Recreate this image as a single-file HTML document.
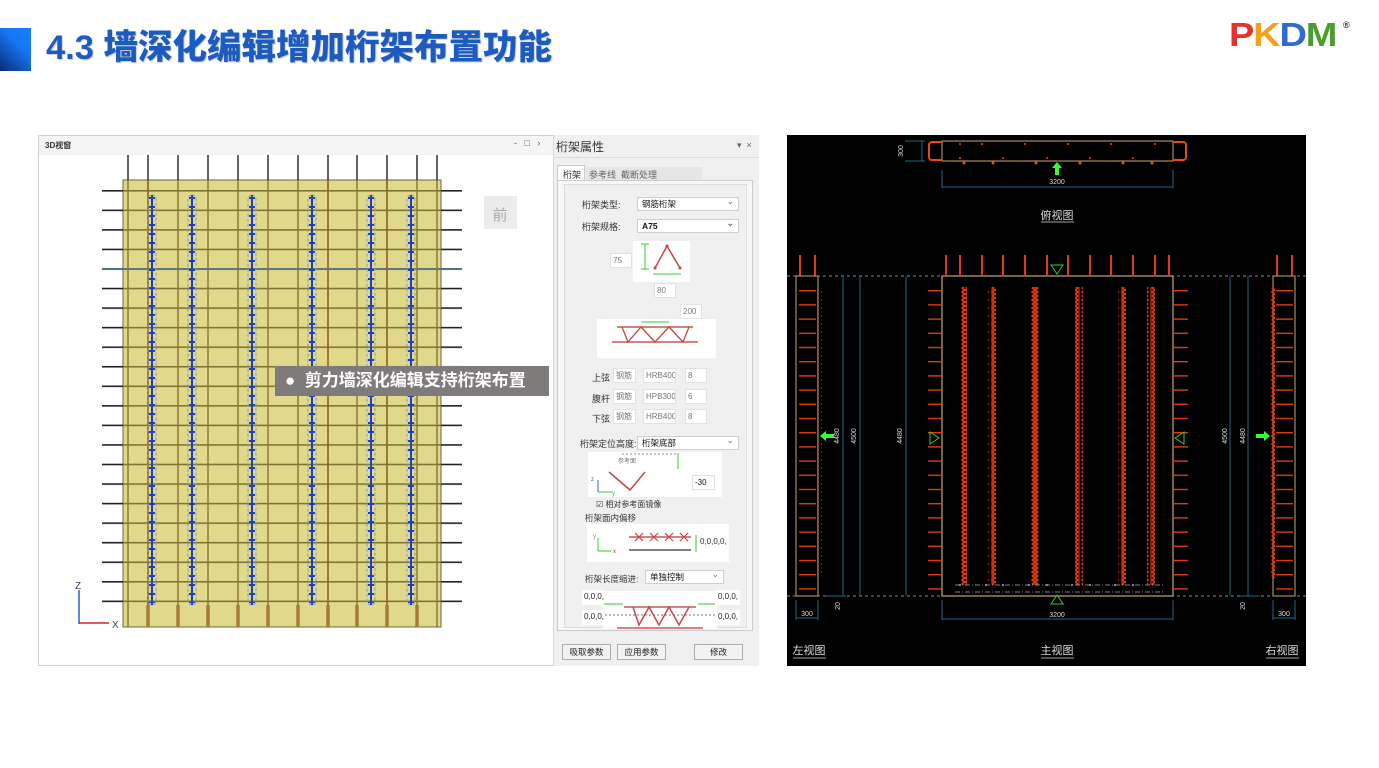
<!DOCTYPE html>
<html><head><meta charset="utf-8">
<style>
*{margin:0;padding:0;box-sizing:border-box}
body{width:1379px;height:768px;background:#fff;position:relative;overflow:hidden;font-family:"Liberation Sans","Noto Sans CJK SC",sans-serif}
.a{position:absolute}
.t{font-size:9px;color:#333;white-space:nowrap}
.inp{position:absolute;background:#fff;border:1px solid #e2e2e2;font-size:8px;color:#777;padding:2px 2px;height:15px;line-height:10px;white-space:nowrap;overflow:hidden}
.sel{position:absolute;background:#fff;border:1px solid #cfcfcf;font-size:8.5px;color:#111;padding:2px 4px;height:14px;line-height:9px}
.sel:after{content:"⌄";position:absolute;right:4px;top:-1px;color:#777;font-size:9px}
.btn{position:absolute;background:#f2f2f2;border:1px solid #adadad;font-size:8.5px;color:#222;text-align:center;height:16px;line-height:14px}
.img{position:absolute;background:#fff}
</style></head><body>

<!-- title -->
<div class="a" style="left:0;top:28px;width:31px;height:43px;background:linear-gradient(45deg,#0a2a78,#1477f0 60%,#1a80ff)"></div>
<div class="a" style="left:46px;top:26px;font-size:34.5px;font-weight:900;color:#1c5cc0;font-family:'Liberation Sans','Noto Sans CJK SC',sans-serif;white-space:nowrap;line-height:44px;text-shadow:1px 1px 1px rgba(0,0,0,0.2)">4.3 墙深化编辑增加桁架布置功能</div>

<!-- logo -->
<div class="a" style="left:1229px;top:16px;font-size:33px;font-weight:900;white-space:nowrap;letter-spacing:-1px;line-height:38px;transform:scaleX(1.15);transform-origin:left"><span style="color:#e5322a">P</span><span style="color:#f2a21b">K</span><span style="color:#2f6bd0">D</span><span style="color:#4c9e2c">M</span></div>
<div class="a" style="left:1343px;top:20px;font-size:9px;font-weight:bold;color:#333">®</div>

<!-- 3D window -->
<div class="a" style="left:38px;top:135px;width:516px;height:531px;border:1px solid #d0d0d0;background:#fff"></div>
<div class="a" style="left:39px;top:136px;width:514px;height:19px;background:#f5f5f5"></div>
<div class="a t" style="left:45px;top:140px;font-size:8px;font-weight:bold">3D视窗</div>
<div class="a t" style="left:514px;top:138px;font-size:9px;color:#555">-&nbsp;&nbsp;&nbsp;□&nbsp;&nbsp;&nbsp;›</div>
<svg class="a" style="left:0;top:0" width="560" height="680">
<defs>
<pattern id="hl" x="0" y="190" width="10" height="19.55" patternUnits="userSpaceOnUse"><rect x="0" y="0" width="10" height="1.6" fill="#7e7433"/></pattern>
<pattern id="st" x="0" y="190" width="10" height="19.55" patternUnits="userSpaceOnUse"><rect x="0" y="0" width="10" height="1.6" fill="#222"/></pattern>
<g id="tr"><rect x="-4" y="195" width="8" height="410" rx="4" fill="none" stroke="#8a9aa8" stroke-width="1" stroke-dasharray="3 2"/><line x1="0" y1="195" x2="0" y2="605" stroke="#1a3fc8" stroke-width="2"/><line x1="0" y1="197" x2="0" y2="603" stroke="#1a3fc8" stroke-width="6" stroke-dasharray="2 7"/></g>
</defs>
<rect x="123" y="180" width="318" height="447" fill="#e0d98b" stroke="#6b6540" stroke-width="1"/>
<rect x="123" y="189" width="318" height="430" fill="url(#hl)"/>
<rect x="102" y="189" width="21" height="430" fill="url(#st)"/>
<rect x="441" y="189" width="21" height="430" fill="url(#st)"/>
<line x1="102" y1="269" x2="462" y2="269" stroke="#3c6f86" stroke-width="1.5"/>
<g stroke="#8a7a3a" stroke-width="1.5">
<line x1="128" y1="180" x2="128" y2="627"/><line x1="178" y1="180" x2="178" y2="627"/><line x1="208" y1="180" x2="208" y2="627"/><line x1="238" y1="180" x2="238" y2="627"/><line x1="268" y1="180" x2="268" y2="627"/><line x1="298" y1="180" x2="298" y2="627"/><line x1="357" y1="180" x2="357" y2="627"/><line x1="417" y1="180" x2="417" y2="627"/><line x1="437" y1="180" x2="437" y2="627"/>
</g>
<g stroke="#9a6a2a" stroke-width="1.8"><line x1="148" y1="180" x2="148" y2="627"/><line x1="328" y1="180" x2="328" y2="627"/><line x1="387" y1="180" x2="387" y2="627"/></g>
<g stroke="#a87a3a" stroke-width="3.5"><line x1="148" y1="605" x2="148" y2="627"/><line x1="178" y1="605" x2="178" y2="627"/><line x1="208" y1="605" x2="208" y2="627"/><line x1="238" y1="605" x2="238" y2="627"/><line x1="268" y1="605" x2="268" y2="627"/><line x1="298" y1="605" x2="298" y2="627"/><line x1="328" y1="605" x2="328" y2="627"/><line x1="357" y1="605" x2="357" y2="627"/><line x1="387" y1="605" x2="387" y2="627"/><line x1="417" y1="605" x2="417" y2="627"/></g>
<g stroke="#111" stroke-width="1.3">
<line x1="128" y1="155" x2="128" y2="180"/><line x1="148" y1="155" x2="148" y2="180"/><line x1="178" y1="155" x2="178" y2="180"/><line x1="208" y1="155" x2="208" y2="180"/><line x1="238" y1="155" x2="238" y2="180"/><line x1="268" y1="155" x2="268" y2="180"/><line x1="298" y1="155" x2="298" y2="180"/><line x1="328" y1="155" x2="328" y2="180"/><line x1="357" y1="155" x2="357" y2="180"/><line x1="387" y1="155" x2="387" y2="180"/><line x1="417" y1="155" x2="417" y2="180"/><line x1="437" y1="155" x2="437" y2="180"/>
</g>
<use href="#tr" x="152"/><use href="#tr" x="192"/><use href="#tr" x="252"/><use href="#tr" x="312"/><use href="#tr" x="371"/><use href="#tr" x="411"/>
<rect x="484" y="196" width="33" height="33" fill="#ececec"/>
<text x="500" y="220" font-size="15" fill="#aaa" text-anchor="middle" font-family="Noto Sans CJK SC">前</text>
<line x1="79" y1="590" x2="79" y2="624" stroke="#2a5ed8" stroke-width="1.5"/>
<line x1="79" y1="623" x2="109" y2="623" stroke="#e02020" stroke-width="1.5"/>
<text x="75" y="589" font-size="10" fill="#444">Z</text>
<text x="112" y="628" font-size="10" fill="#444">X</text>
</svg>
<div class="a" style="left:275px;top:366px;width:274px;height:30px;background:#7f7b7a;color:#fff;font-size:17px;line-height:30px;padding-left:10px;white-space:nowrap;font-weight:bold;font-family:'Liberation Sans','Noto Sans CJK SC',sans-serif">●&nbsp;&nbsp;剪力墙深化编辑支持桁架布置</div>

<!-- property panel -->
<div class="a" style="left:553px;top:135px;width:206px;height:531px;background:#f0f0f0;border-left:1px solid #d8d8d8"></div>
<div class="a" style="left:556px;top:138px;font-size:12px;color:#333">桁架属性</div>
<div class="a t" style="left:737px;top:140px;color:#666">▾&nbsp;&nbsp;×</div>
<div class="a" style="left:553px;top:157px;width:206px;height:1px;background:#ddd"></div>
<div class="a" style="left:557px;top:165px;width:28px;height:16px;background:#fff;border:1px solid #ccc;border-bottom:none"></div>
<div class="a t" style="left:563px;top:168px">桁架</div>
<div class="a" style="left:586px;top:167px;width:116px;height:13px;background:#e6e6e6"></div>
<div class="a t" style="left:589px;top:168px;color:#666">参考线&nbsp;&nbsp;截断处理</div>
<div class="a" style="left:557px;top:180px;width:196px;height:451px;background:#f7f7f7;border:1px solid #ccc"></div>
<div class="a" style="left:564px;top:184px;width:183px;height:444px;background:#f0f0f0;border:1px solid #ddd"></div>

<div class="a t" style="left:582px;top:198px">桁架类型:</div>
<div class="sel" style="left:637px;top:197px;width:102px">钢筋桁架</div>
<div class="a t" style="left:582px;top:220px">桁架规格:</div>
<div class="sel" style="left:637px;top:219px;width:102px;font-weight:bold">A75</div>

<div class="img" style="left:633px;top:241px;width:57px;height:41px"></div>
<svg class="a" style="left:633px;top:241px" width="57" height="41"><line x1="12" y1="3" x2="12" y2="28" stroke="#3c3" stroke-width="1"/><line x1="8" y1="3" x2="16" y2="3" stroke="#3c3"/><line x1="8" y1="28" x2="16" y2="28" stroke="#3c3"/><line x1="20" y1="33" x2="48" y2="33" stroke="#3c3"/><polyline points="22,27 34,5 47,27" fill="none" stroke="#c44" stroke-width="1.5"/><circle cx="22" cy="27" r="1.5" fill="#c44"/><circle cx="47" cy="27" r="1.5" fill="#c44"/><circle cx="34" cy="5" r="1.5" fill="#c44"/></svg>
<div class="inp" style="left:610px;top:253px;width:22px">75</div>
<div class="inp" style="left:654px;top:283px;width:22px">80</div>
<div class="inp" style="left:680px;top:304px;width:22px">200</div>
<div class="img" style="left:597px;top:319px;width:119px;height:39px"></div>
<svg class="a" style="left:597px;top:319px" width="119" height="39"><line x1="44" y1="3" x2="72" y2="3" stroke="#3c3"/><line x1="20" y1="8" x2="96" y2="8" stroke="#c55" stroke-width="1.5"/><line x1="15" y1="23" x2="101" y2="23" stroke="#c55" stroke-width="1.5"/><polyline points="25,8 31,23 44,8 58,23 72,8 86,23 92,8" fill="none" stroke="#c44" stroke-width="1.3"/></svg>

<div class="a t" style="left:592px;top:371px">上弦</div><div class="inp" style="left:613px;top:368px;width:23px">钢筋</div><div class="inp" style="left:643px;top:368px;width:33px">HRB400</div><div class="inp" style="left:685px;top:368px;width:22px">8</div>
<div class="a t" style="left:592px;top:392px">腹杆</div><div class="inp" style="left:613px;top:389px;width:23px">钢筋</div><div class="inp" style="left:643px;top:389px;width:33px">HPB300</div><div class="inp" style="left:685px;top:389px;width:22px">6</div>
<div class="a t" style="left:592px;top:412px">下弦</div><div class="inp" style="left:613px;top:409px;width:23px">钢筋</div><div class="inp" style="left:643px;top:409px;width:33px">HRB400</div><div class="inp" style="left:685px;top:409px;width:22px">8</div>

<div class="a t" style="left:580px;top:437px">桁架定位高度:</div>
<div class="sel" style="left:637px;top:436px;width:102px">桁架底部</div>
<div class="img" style="left:588px;top:452px;width:134px;height:45px"></div>
<svg class="a" style="left:588px;top:452px" width="134" height="45"><line x1="34" y1="2" x2="88" y2="2" stroke="#888" stroke-dasharray="2 2"/><line x1="90" y1="1" x2="90" y2="17" stroke="#3c3"/><polyline points="21,20 42,38 57,20" fill="none" stroke="#c44" stroke-width="1.5"/><line x1="10" y1="28" x2="10" y2="40" stroke="#36c"/><line x1="10" y1="40" x2="24" y2="40" stroke="#3c3"/><text x="30" y="11" font-size="6" fill="#777">参考面</text><text x="3" y="29" font-size="6" fill="#36c">z</text><text x="24" y="43" font-size="6" fill="#3c3">y</text></svg>
<div class="inp" style="left:692px;top:475px;width:23px;color:#111">-30</div>
<div class="a t" style="left:596px;top:499px;font-size:8px">☑ 相对参考面镜像</div>
<div class="a t" style="left:585px;top:512px;font-size:8.5px">桁架面内偏移</div>
<div class="img" style="left:587px;top:524px;width:142px;height:38px"></div>
<svg class="a" style="left:587px;top:524px" width="142" height="38"><line x1="42" y1="13" x2="104" y2="13" stroke="#c55" stroke-width="1.5"/><g stroke="#c44" stroke-width="1.2"><path d="M48 9l8 8M56 9l-8 8M63 9l8 8M71 9l-8 8M78 9l8 8M86 9l-8 8M93 9l8 8M101 9l-8 8"/></g><line x1="42" y1="26" x2="104" y2="26" stroke="#555" stroke-width="1.5"/><line x1="109" y1="11" x2="109" y2="28" stroke="#3c3"/><line x1="11" y1="14" x2="11" y2="27" stroke="#3c3"/><line x1="11" y1="27" x2="24" y2="27" stroke="#3c3"/><text x="6" y="14" font-size="6" fill="#3c3">y</text><text x="26" y="29" font-size="6" fill="#c44">x</text></svg>
<div class="a t" style="left:700px;top:537px;font-size:8px">0,0,0,0,</div>
<div class="a t" style="left:585px;top:573px;font-size:8.5px">桁架长度缩进:</div>
<div class="sel" style="left:645px;top:570px;width:79px">单独控制</div>
<div class="img" style="left:603px;top:591px;width:114px;height:38px"></div>
<svg class="a" style="left:603px;top:591px" width="114" height="38"><line x1="21" y1="16" x2="93" y2="16" stroke="#c55" stroke-width="1.5"/><line x1="2" y1="24" x2="112" y2="24" stroke="#777" stroke-dasharray="2 2"/><line x1="0" y1="13" x2="20" y2="13" stroke="#3c3"/><line x1="95" y1="13" x2="112" y2="13" stroke="#3c3"/><polyline points="30,16 36,34 46,16 56,34 66,16 76,34 86,16" fill="none" stroke="#c44" stroke-width="1.5"/><line x1="14" y1="37" x2="100" y2="37" stroke="#c55" stroke-width="1.5"/></svg>
<div class="inp" style="left:582px;top:590px;width:22px;color:#222;border:none">0,0,0,</div>
<div class="inp" style="left:582px;top:610px;width:22px;color:#222;border:none">0,0,0,</div>
<div class="inp" style="left:716px;top:590px;width:24px;color:#222;border:none">0,0,0,</div>
<div class="inp" style="left:716px;top:610px;width:24px;color:#222;border:none">0,0,0,</div>
<div class="btn" style="left:562px;top:644px;width:49px">吸取参数</div>
<div class="btn" style="left:617px;top:644px;width:49px">应用参数</div>
<div class="btn" style="left:694px;top:644px;width:49px">修改</div>

<!-- CAD -->
<svg class="a" style="left:787px;top:135px" width="519" height="531">
<defs>
<pattern id="tk" x="0" y="148" width="20" height="14.2" patternUnits="userSpaceOnUse"><rect x="0" y="0" width="20" height="1.4" fill="#e23a10"/></pattern>
<pattern id="tv" x="0" y="0" width="10" height="8" patternUnits="userSpaceOnUse"><path d="M2 0L8 4L2 8M8 0L2 4L8 8" stroke="#e83a10" stroke-width="1.6" fill="none"/></pattern>
</defs>
<rect width="519" height="531" fill="#000"/>
<g transform="translate(-787,-135)">
<rect x="942" y="141" width="231" height="20" fill="none" stroke="#c9a86a" stroke-width="1"/>
<path d="M942 142h-10a3 3 0 0 0 -3 3v12a3 3 0 0 0 3 3h10M1173 142h10a3 3 0 0 1 3 3v12a3 3 0 0 1 -3 3h-10" fill="none" stroke="#e84a10" stroke-width="2"/>
<g fill="#e84a10"><circle cx="960" cy="144" r="1"/><circle cx="982" cy="144" r="1"/><circle cx="1025" cy="144" r="1"/><circle cx="1068" cy="144" r="1"/><circle cx="1111" cy="144" r="1"/><circle cx="1155" cy="144" r="1"/><circle cx="960" cy="158" r="1"/><circle cx="1003" cy="158" r="1"/><circle cx="1047" cy="158" r="1"/><circle cx="1090" cy="158" r="1"/><circle cx="1133" cy="158" r="1"/><circle cx="964" cy="163" r="1.5"/><circle cx="993" cy="163" r="1.5"/><circle cx="1036" cy="163" r="1.5"/><circle cx="1080" cy="163" r="1.5"/><circle cx="1123" cy="163" r="1.5"/><circle cx="1152" cy="163" r="1.5"/></g>
<path d="M1057 162l-5 6h3v7h4v-7h3z" fill="#3f3"/>
<g stroke="#1a6a8a" stroke-width="1" fill="none"><path d="M942 170v18M1173 170v18M942 187h231M922 141v20M905 141h20M905 161h20"/></g>
<text x="1057" y="184" font-size="7" fill="#ddd" text-anchor="middle">3200</text>
<text x="903" y="151" font-size="7" fill="#ddd" text-anchor="middle" transform="rotate(-90 903 151)">300</text>
<text x="1057" y="219" font-size="11" fill="#ddd" text-anchor="middle" font-family="Noto Sans CJK SC">俯视图</text>
<line x1="1041" y1="222" x2="1074" y2="222" stroke="#ddd" stroke-width="0.8"/>
<g stroke="#bbb" stroke-width="0.8" stroke-dasharray="3 3"><line x1="787" y1="276" x2="1306" y2="276"/><line x1="787" y1="596" x2="1306" y2="596"/></g>
<rect x="942" y="276" width="231" height="320" fill="none" stroke="#c9a86a" stroke-width="1.2"/>
<g stroke="#e23a10" stroke-width="2"><path d="M946 255v21M960 255v21M982 255v21M1003 255v21M1025 255v21M1047 255v21M1068 255v21M1090 255v21M1111 255v21M1133 255v21M1155 255v21M1169 255v21"/><path d="M800 255v21M815 255v21M1277 255v21M1292 255v21"/></g>
<rect x="928" y="283" width="14" height="308" fill="url(#tk)"/>
<rect x="1173" y="283" width="15" height="308" fill="url(#tk)"/>
<rect x="799" y="283" width="17" height="308" fill="url(#tk)"/>
<rect x="1276" y="283" width="17" height="308" fill="url(#tk)"/>
<rect x="796" y="276" width="22" height="320" fill="none" stroke="#c9a86a" stroke-width="1"/>
<rect x="1273" y="276" width="22" height="320" fill="none" stroke="#c9a86a" stroke-width="1"/>
<rect x="817" y="288" width="5" height="290" fill="url(#tv)"/>
<rect x="1270" y="288" width="5" height="290" fill="url(#tv)"/>
<g fill="url(#tv)"><rect x="959" y="287" width="8" height="298"/><rect x="988" y="287" width="8" height="298"/><rect x="1031" y="287" width="8" height="298"/><rect x="1075" y="287" width="8" height="298"/><rect x="1118" y="287" width="8" height="298"/><rect x="1147" y="287" width="8" height="298"/></g>
<g stroke="#e23a10" stroke-width="1"><path d="M963 287v298M992 287v298M1035 287v298M1079 287v298M1122 287v298M1151 287v298"/></g>
<g stroke="#aaa" stroke-width="0.8" stroke-dasharray="5 2 1 2"><line x1="955" y1="585" x2="1163" y2="585"/><line x1="955" y1="592" x2="1163" y2="592"/></g>
<g fill="#c8f"><circle cx="960" cy="585" r="1"/><circle cx="986" cy="585" r="1"/><circle cx="1003" cy="585" r="1"/><circle cx="1029" cy="585" r="1"/><circle cx="1047" cy="585" r="1"/><circle cx="1072" cy="585" r="1"/><circle cx="1090" cy="585" r="1"/><circle cx="1115" cy="585" r="1"/><circle cx="1133" cy="585" r="1"/></g>
<g fill="none" stroke="#3c3" stroke-width="1"><path d="M1051 265h12l-6 9z"/><path d="M1051 604h12l-6 -9z"/><path d="M930 432v12l9 -6z"/><path d="M1184 432v12l-9 -6z"/></g>
<path d="M820 436l6 -5v3h8v4h-8v3z" fill="#3f3"/>
<path d="M1270 436l-6 -5v3h-8v4h8v3z" fill="#3f3"/>
<g stroke="#1a6a8a" stroke-width="1" fill="none"><path d="M843 276v320M860 276v320M906 276v320M1230 276v320M1248 276v320M942 600v20M1173 600v20M942 619h231M796 600v20M818 600v20M796 618h22M1273 600v20M1295 600v20M1273 618h22M826 596h20M1240 596h20"/></g>
<g font-size="7" fill="#ddd" text-anchor="middle"><text x="1057" y="617">3200</text><text x="807" y="616">300</text><text x="1284" y="616">300</text>
<text transform="translate(839 436) rotate(-90)">4480</text><text transform="translate(856 436) rotate(-90)">4500</text><text transform="translate(902 436) rotate(-90)">4480</text><text transform="translate(1227 436) rotate(-90)">4500</text><text transform="translate(1245 436) rotate(-90)">4480</text>
<text transform="translate(840 606) rotate(-90)">20</text><text transform="translate(1245 606) rotate(-90)">20</text></g>
<g font-size="11" fill="#ddd" text-anchor="middle" font-family="Noto Sans CJK SC"><text x="809" y="654">左视图</text><text x="1057" y="654">主视图</text><text x="1282" y="654">右视图</text></g>
<g stroke="#ddd" stroke-width="0.8"><line x1="793" y1="658" x2="826" y2="658"/><line x1="1041" y1="658" x2="1074" y2="658"/><line x1="1266" y1="658" x2="1299" y2="658"/></g>
</g>
</svg>
</body></html>
